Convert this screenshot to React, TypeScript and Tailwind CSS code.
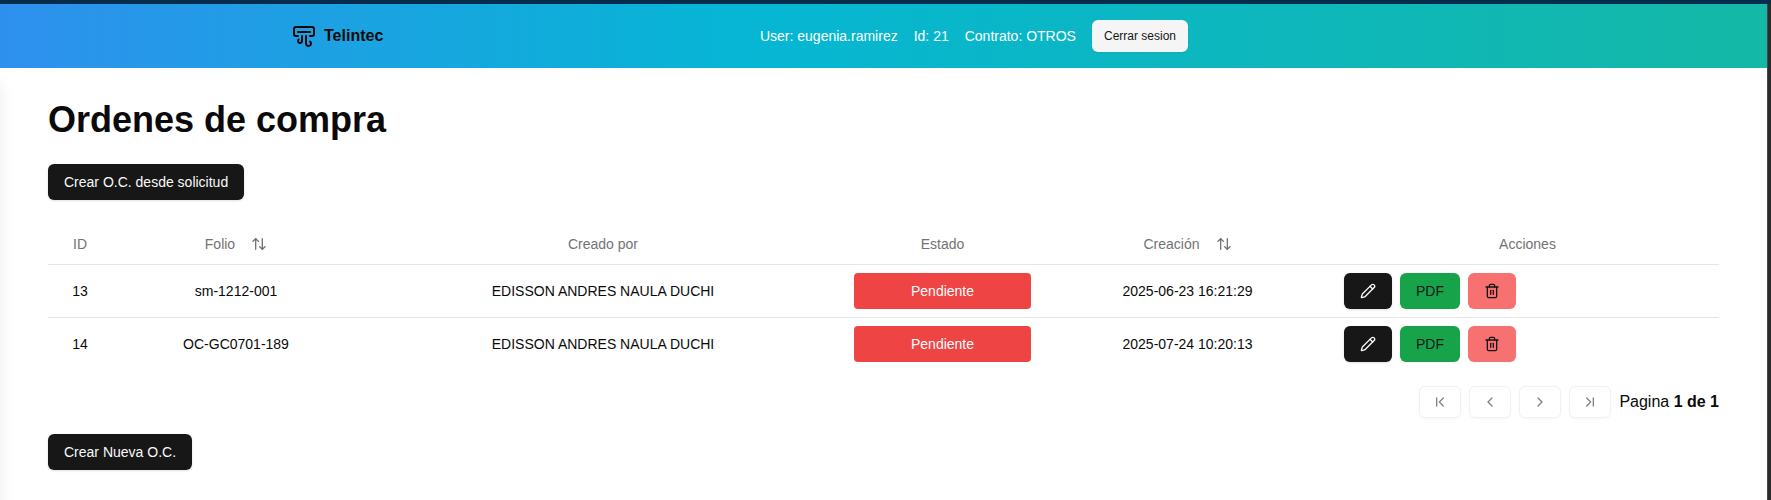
import {
  AirVent,
  ArrowUpDown,
  ChevronFirst,
  ChevronLast,
  ChevronLeft,
  ChevronRight,
  Pencil,
  Trash2,
} from "lucide-react";

interface Order {
  id: number;
  folio: string;
  createdBy: string;
  status: string;
  createdAt: string;
}

const orders: Order[] = [
  {
    id: 13,
    folio: "sm-1212-001",
    createdBy: "EDISSON ANDRES NAULA DUCHI",
    status: "Pendiente",
    createdAt: "2025-06-23 16:21:29",
  },
  {
    id: 14,
    folio: "OC-GC0701-189",
    createdBy: "EDISSON ANDRES NAULA DUCHI",
    status: "Pendiente",
    createdAt: "2025-07-24 10:20:13",
  },
];

const pager = [
  { label: "Primera pagina", Icon: ChevronFirst },
  { label: "Pagina anterior", Icon: ChevronLeft },
  { label: "Pagina siguiente", Icon: ChevronRight },
  { label: "Ultima pagina", Icon: ChevronLast },
];

const primaryButton =
  "flex h-9 items-center justify-center rounded-md bg-neutral-900 px-4 text-sm text-neutral-50 shadow-sm";

function Header() {
  return (
    <header className="flex h-16 items-center bg-linear-to-r/srgb from-[#2e90ee] via-[#06b6d4] via-42% to-[#14b8a6] pl-[292px]">
      <div className="flex w-full max-w-4xl items-center justify-between">
        <a href="#" className="flex items-center gap-2 font-bold">
          <AirVent className="size-6" />
          Telintec
        </a>
        <div className="flex items-center gap-4 text-sm whitespace-nowrap text-white">
          <span>User: eugenia.ramirez</span>
          <span>Id: 21</span>
          <span>Contrato: OTROS</span>
          <button
            type="button"
            className="h-8 rounded-md bg-neutral-100 px-3 text-xs text-neutral-900 shadow-xs"
          >
            Cerrar sesion
          </button>
        </div>
      </div>
    </header>
  );
}

function SortButton({ label }: { label: string }) {
  return (
    <button type="button" className="mx-auto flex items-center gap-4">
      {label}
      <ArrowUpDown className="size-4" />
    </button>
  );
}

function OrdersTable() {
  return (
    <table className="w-full table-fixed text-center text-sm">
      <colgroup>
        <col className="w-[64px]" />
        <col className="w-[248px]" />
        <col className="w-[486px]" />
        <col className="w-[193px]" />
        <col className="w-[297px]" />
        <col className="w-[383px]" />
      </colgroup>
      <thead>
        <tr className="h-10 border-b border-neutral-200 text-neutral-500 [&>th]:p-0 [&>th]:font-normal">
          <th>ID</th>
          <th>
            <SortButton label="Folio" />
          </th>
          <th>Creado por</th>
          <th>Estado</th>
          <th>
            <SortButton label="Creación" />
          </th>
          <th>Acciones</th>
        </tr>
      </thead>
      <tbody>
        {orders.map((order) => (
          <tr
            key={order.id}
            className="border-b border-neutral-200 last:border-0 [&>td]:p-2"
          >
            <td>{order.id}</td>
            <td>{order.folio}</td>
            <td>{order.createdBy}</td>
            <td>
              <div className="flex h-9 items-center justify-center rounded bg-[#ef4444] text-white">
                {order.status}
              </div>
            </td>
            <td>{order.createdAt}</td>
            <td>
              <div className="flex gap-2">
                <button type="button" aria-label="Editar" className={primaryButton}>
                  <Pencil className="size-4" />
                </button>
                <button
                  type="button"
                  className="h-9 rounded-md bg-[#16a34a] px-4 text-neutral-900"
                >
                  PDF
                </button>
                <button
                  type="button"
                  aria-label="Eliminar"
                  className="h-9 rounded-md bg-[#f87171] px-4 text-neutral-900"
                >
                  <Trash2 className="size-4" />
                </button>
              </div>
            </td>
          </tr>
        ))}
      </tbody>
    </table>
  );
}

function Pagination() {
  return (
    <nav className="flex items-center justify-end gap-2">
      {pager.map(({ label, Icon }) => (
        <button
          key={label}
          type="button"
          disabled
          aria-label={label}
          className="flex h-8 items-center rounded-md border border-neutral-200 px-3 opacity-50 shadow-xs"
        >
          <Icon className="size-4" />
        </button>
      ))}
      <span>
        Pagina <strong>1 de 1</strong>
      </span>
    </nav>
  );
}

export default function App() {
  return (
    <div className="flex min-h-screen flex-col bg-white font-['Liberation_Sans',Arial,sans-serif] text-neutral-950">
      <div className="h-1 bg-[#062d4b]" />
      <div className="flex grow">
        <div className="flex min-w-0 grow flex-col">
          <Header />
          <main className="relative grow overflow-hidden px-12 py-8">
            <div className="absolute top-4 -bottom-8 -left-4 w-4 shadow-[0_0_16px_rgba(0,0,0,0.08)]" />
            <h1 className="mb-6 text-4xl font-bold">Ordenes de compra</h1>
            <button type="button" className={primaryButton}>
              Crear O.C. desde solicitud
            </button>
            <div className="mt-6 mb-4 flex flex-col gap-4">
              <OrdersTable />
              <Pagination />
            </div>
            <button type="button" className={primaryButton}>
              Crear Nueva O.C.
            </button>
          </main>
        </div>
        <div className="w-1 shrink-0 border-l border-[#464646] bg-[#2b2b2b]" />
      </div>
    </div>
  );
}
